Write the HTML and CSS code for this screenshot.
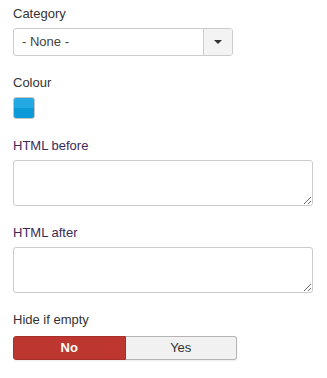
FILE: index.html
```html
<!DOCTYPE html>
<html lang="en">
<head>
    <meta charset="UTF-8">
    <title>Module options</title>
    <link rel="stylesheet" href="styles.css">
</head>
<body>
    <div class="form">
        <div class="control-group">
            <label class="control-label">Category</label>
            <div class="select">
                <span class="select-value">- None -</span>
                <span class="select-btn"><span class="caret"></span></span>
            </div>
        </div>

        <div class="control-group">
            <label class="control-label">Colour</label>
            <span class="swatch"></span>
        </div>

        <div class="control-group">
            <label class="control-label tip">HTML before</label>
            <textarea class="textarea"></textarea>
        </div>

        <div class="control-group">
            <label class="control-label tip">HTML after</label>
            <textarea class="textarea"></textarea>
        </div>

        <div class="control-group">
            <label class="control-label">Hide if empty</label>
            <div class="btn-group">
                <span class="btn active">No</span>
                <span class="btn">Yes</span>
            </div>
        </div>
    </div>
</body>
</html>
```

FILE: styles.css
```css
body {
    margin: 0;
    background: #fff;
    font-family: "Liberation Sans", Arial, sans-serif;
    font-size: 13px;
    line-height: 18px;
    color: #333;
}
.form {
    padding: 5px 13px;
}
.control-group {
    display: flex;
    flex-direction: column;
    align-items: flex-start;
    margin-bottom: 18px;
}
.control-label {
    margin-bottom: 5px;
}
.control-label.tip {
    color: #3d2a58;
}
.select {
    display: flex;
    width: 218px;
    height: 26px;
    border: 1px solid #ccc;
    border-radius: 3px;
    background: #fff;
    overflow: hidden;
}
.select-value {
    flex: 1;
    padding-left: 8px;
    line-height: 26px;
    color: #444;
}
.select-btn {
    width: 28px;
    border-left: 1px solid #ccc;
    background: #f3f3f3;
    display: flex;
    justify-content: center;
    align-items: center;
}
.caret {
    width: 0;
    height: 0;
    border-left: 4px solid transparent;
    border-right: 4px solid transparent;
    border-top: 4px solid #333;
}
.swatch {
    width: 20px;
    height: 20px;
    border: 1px solid #c4c4c4;
    border-radius: 3px;
    background: linear-gradient(#24a8e2 0%, #24a8e2 50%, #0c9ad8 50%, #0c9ad8 100%);
}
.textarea {
    box-sizing: border-box;
    width: 300px;
    height: 46px;
    margin: 0;
    border: 1px solid #ccc;
    border-radius: 3px;
    font-family: inherit;
    font-size: 13px;
    resize: both;
}
.btn-group {
    display: flex;
    width: 224px;
    height: 24px;
    margin-top: 2px;
    border-radius: 3px;
    box-shadow: 0 1px 2px rgba(0, 0, 0, 0.08);
}
.btn {
    flex: 1;
    display: flex;
    justify-content: center;
    align-items: center;
    background: #f1f1f1;
    border: 1px solid #b5b5b5;
    border-left: none;
    border-radius: 0 3px 3px 0;
    color: #333;
}
.btn.active {
    background: #bd362f;
    border: 1px solid #a9302a;
    border-radius: 3px 0 0 3px;
    color: #fff;
    font-weight: bold;
}
```
